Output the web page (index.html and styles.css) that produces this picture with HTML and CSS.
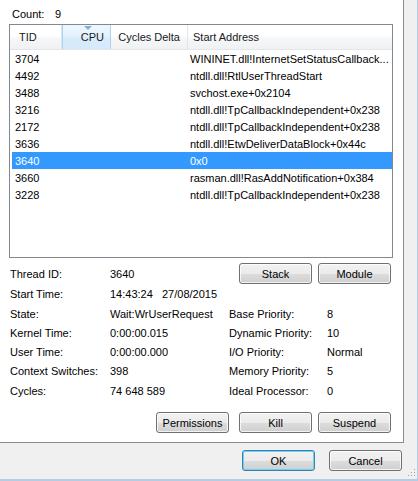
FILE: index.html
```html
<!DOCTYPE html>
<html>
<head>
<meta charset="utf-8">
<link rel="stylesheet" href="styles.css">
</head>
<body>
<div class="window">
  <div class="main">
    <div class="page">
      <div class="count"><span class="count-label">Count:</span><span>9</span></div>
      <div class="list">
        <div class="header">
          <div class="hcell h-tid">TID</div>
          <div class="hcell h-cpu sorted"><span class="arrow"></span>CPU</div>
          <div class="hcell h-cyc">Cycles Delta</div>
          <div class="hcell h-addr">Start Address</div>
        </div>
        <div class="row"><div class="cell c-tid">3704</div><div class="cell c-cpu"></div><div class="cell c-cyc"></div><div class="cell c-addr">WININET.dll!InternetSetStatusCallback...</div></div>
        <div class="row"><div class="cell c-tid">4492</div><div class="cell c-cpu"></div><div class="cell c-cyc"></div><div class="cell c-addr">ntdll.dll!RtlUserThreadStart</div></div>
        <div class="row"><div class="cell c-tid">3488</div><div class="cell c-cpu"></div><div class="cell c-cyc"></div><div class="cell c-addr">svchost.exe+0x2104</div></div>
        <div class="row"><div class="cell c-tid">3216</div><div class="cell c-cpu"></div><div class="cell c-cyc"></div><div class="cell c-addr">ntdll.dll!TpCallbackIndependent+0x238</div></div>
        <div class="row"><div class="cell c-tid">2172</div><div class="cell c-cpu"></div><div class="cell c-cyc"></div><div class="cell c-addr">ntdll.dll!TpCallbackIndependent+0x238</div></div>
        <div class="row"><div class="cell c-tid">3636</div><div class="cell c-cpu"></div><div class="cell c-cyc"></div><div class="cell c-addr">ntdll.dll!EtwDeliverDataBlock+0x44c</div></div>
        <div class="row selected"><div class="cell c-tid">3640</div><div class="cell c-cpu"></div><div class="cell c-cyc"></div><div class="cell c-addr">0x0</div></div>
        <div class="row"><div class="cell c-tid">3660</div><div class="cell c-cpu"></div><div class="cell c-cyc"></div><div class="cell c-addr">rasman.dll!RasAddNotification+0x384</div></div>
        <div class="row"><div class="cell c-tid">3228</div><div class="cell c-cpu"></div><div class="cell c-cyc"></div><div class="cell c-addr">ntdll.dll!TpCallbackIndependent+0x238</div></div>
      </div>
      <div class="details">
        <div class="lbl">Thread ID:</div><div class="val">3640</div>
        <div class="btns-top"><button class="btn">Stack</button><button class="btn">Module</button></div>
        <div class="lbl">Start Time:</div><div class="val"><span class="time">14:43:24</span>27/08/2015</div><div></div><div></div>
        <div class="lbl">State:</div><div class="val">Wait:WrUserRequest</div><div class="lbl">Base Priority:</div><div class="val">8</div>
        <div class="lbl">Kernel Time:</div><div class="val">0:00:00.015</div><div class="lbl">Dynamic Priority:</div><div class="val">10</div>
        <div class="lbl">User Time:</div><div class="val">0:00:00.000</div><div class="lbl">I/O Priority:</div><div class="val">Normal</div>
        <div class="lbl">Context Switches:</div><div class="val">398</div><div class="lbl">Memory Priority:</div><div class="val">5</div>
        <div class="lbl">Cycles:</div><div class="val">74 648 589</div><div class="lbl">Ideal Processor:</div><div class="val">0</div>
      </div>
      <div class="actions">
        <button class="btn">Permissions</button>
        <button class="btn gap-l">Kill</button>
        <button class="btn">Suspend</button>
      </div>
    </div>
    <div class="side"></div>
  </div>
  <div class="footer">
    <button class="btn default">OK</button>
    <button class="btn">Cancel</button>
    <svg class="grip" width="8" height="8" viewBox="0 0 8 8">
      <rect x="6" y="0" width="1" height="1" fill="#a0a0a0"/>
      <rect x="3" y="3" width="1" height="1" fill="#a0a0a0"/>
      <rect x="6" y="3" width="1" height="1" fill="#a0a0a0"/>
      <rect x="0" y="6" width="1" height="1" fill="#a0a0a0"/>
      <rect x="3" y="6" width="1" height="1" fill="#a0a0a0"/>
      <rect x="6" y="6" width="1" height="1" fill="#a0a0a0"/>
    </svg>
  </div>
</div>
</body>
</html>
```
FILE: styles.css
```css
* { box-sizing: border-box; }
html, body { margin: 0; padding: 0; }
body {
  font-family: "Liberation Sans", Arial, sans-serif;
  font-size: 11px;
  color: #000;
  background: #f0f0f0;
}
.window {
  width: 418px;
  height: 481px;
  border-right: 1px solid #b4cde6;
  border-bottom: 2px solid #b4cde6;
  background: #f0f0f0;
  display: flex;
  flex-direction: column;
}
.main {
  display: flex;
  height: 443px;
}
.page {
  width: 404px;
  height: 443px;
  background: #fff;
  border-right: 1px solid #898c95;
  border-bottom: 1px solid #898c95;
}
.side { flex: 1; background: #f0f0f0; }

.count {
  height: 24px;
  padding: 3px 0 0 12px;
  display: flex;
  align-items: center;
}
.count-label { width: 43px; }

.list {
  margin-left: 9px;
  width: 384px;
  height: 234px;
  border: 1px solid #828790;
  overflow: hidden;
}
.header {
  display: flex;
  height: 25px;
  background: linear-gradient(to bottom, #ffffff 0%, #ffffff 45%, #f6f7f9 55%, #f0f1f3 100%);
  border-bottom: 1px solid #e3e5e8;
}
.hcell {
  height: 24px;
  display: flex;
  align-items: center;
  border-right: 1px solid #e1e4e8;
  color: #1a1a1a;
  white-space: nowrap;
}
.h-tid { width: 52px; padding-left: 9px; }
.h-cpu {
  width: 49px;
  justify-content: flex-end;
  padding-right: 6px;
  position: relative;
}
.sorted {
  background: linear-gradient(to bottom, #eef7fe 0%, #e3f1fd 45%, #d8ebfb 55%, #d6eafb 100%);
  border-left: 1px solid #a9d3f1;
  border-right: 1px solid #a9d3f1;
}
.arrow {
  position: absolute;
  top: 1px;
  left: 21px;
  width: 0;
  height: 0;
  border-left: 4px solid transparent;
  border-right: 4px solid transparent;
  border-top: 4px solid #8eaccb;
}
.h-cyc { width: 77px; justify-content: flex-end; padding-right: 7px; }
.h-addr { flex: 1; padding-left: 5px; border-right: none; }

.row {
  display: flex;
  height: 17px;
  margin-left: 2px;
  align-items: center;
  white-space: nowrap;
}
.row.selected { background: #3399ff; color: #fff; }
.cell { overflow: hidden; }
.c-tid { width: 50px; padding-left: 3px; }
.c-cpu { width: 49px; }
.c-cyc { width: 77px; }
.c-addr { flex: 1; padding-left: 2px; }

.details {
  margin-top: 5px;
  padding-left: 10px;
  width: 391px;
  display: grid;
  grid-template-columns: 100px 119px 98px 1fr;
  grid-template-rows: 21px 20px 19px 19px 19px 20px 20px;
  align-items: center;
}
.lbl, .val { white-space: nowrap; }
.time { display: inline-block; width: 52px; }
.btns-top {
  grid-column: 3 / 5;
  display: flex;
  justify-content: flex-end;
  gap: 6px;
  height: 21px;
}

.actions {
  margin-top: 11px;
  width: 391px;
  display: flex;
  justify-content: flex-end;
}
.gap-l { margin: 0 6px 0 10px; }

.btn {
  width: 73px;
  height: 21px;
  padding: 0;
  font-family: "Liberation Sans", Arial, sans-serif;
  font-size: 11px;
  font-weight: normal;
  color: #000;
  border: 1px solid #707070;
  border-radius: 3px;
  background: linear-gradient(to bottom, #f2f2f2 0%, #ebebeb 50%, #dddddd 50%, #cfcfcf 100%);
  box-shadow: inset 0 0 0 1px rgba(255, 255, 255, 0.75);
}
.btn.default {
  border-color: #3c7fb1;
  box-shadow: inset 0 0 0 1px #6fd0f6;
}

.footer {
  position: relative;
  flex: 1;
  display: flex;
  justify-content: flex-end;
  gap: 14px;
  padding: 7px 15px 0 0;
}
.grip {
  position: absolute;
  right: 1px;
  bottom: 2px;
}
```
